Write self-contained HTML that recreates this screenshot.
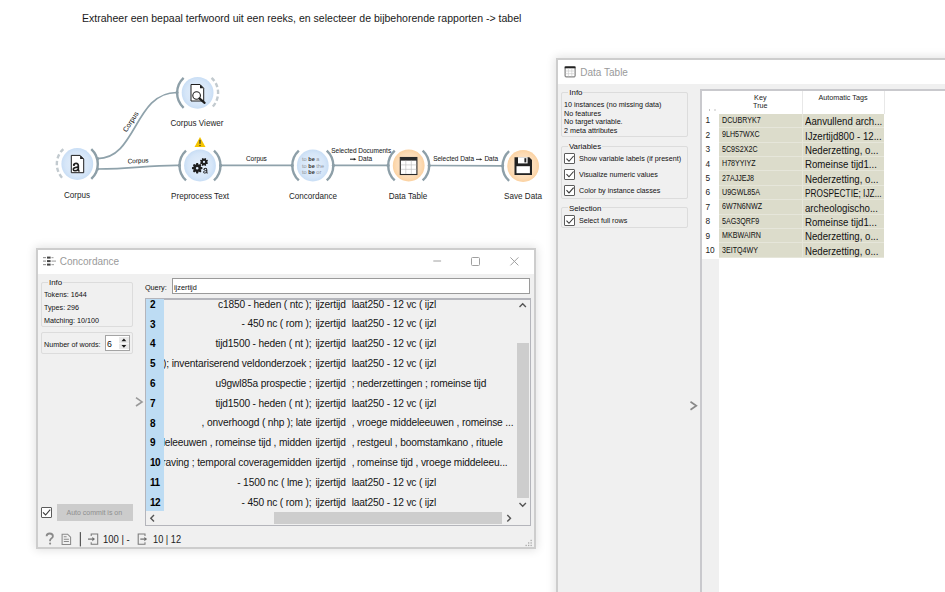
<!DOCTYPE html>
<html><head><meta charset="utf-8">
<style>
*{margin:0;padding:0;box-sizing:border-box}
html,body{width:945px;height:592px;overflow:hidden;background:#fff;font-family:"Liberation Sans",sans-serif;color:#000}
.a{position:absolute;white-space:nowrap}
#title{left:82px;top:12px;font-size:11.5px;line-height:12px;color:#1a1a1a;transform-origin:0 0;transform:scaleX(0.917)}
.win{position:absolute;background:#f0f0f0;border:2px solid #cdcdcd;box-shadow:0 0 9px 1px rgba(0,0,0,0.12)}
.tbar{position:absolute;left:0;top:0;right:0;height:24px;background:#fff}
.ttl{font-size:10px;color:#9a9a9a;line-height:12px}
.grp{position:absolute;border:1px solid #dcdcdc;border-radius:2px}
.glab{position:absolute;background:#f0f0f0;padding:0 1px;font-size:7.9px;line-height:9px;color:#111}
.sm{font-size:7.8px;line-height:9px;color:#111;transform:scaleX(0.92);transform-origin:0 0}
.cb{position:absolute;width:11px;height:11px;border:1px solid #5c5c5c;border-radius:1px;background:#fff}
.lbl{font-size:9px;line-height:10px;color:#1e1e1e;transform:translateX(-50%) scaleX(0.9)}
.ll{font-size:6.5px;line-height:8px;color:#1a1a1a;-webkit-text-stroke:0.05px #1a1a1a;transform:translateX(-50%)}
.row{position:absolute;left:0;height:20px;width:100%}
.ctx{font-size:10.2px;line-height:12px;color:#151515;letter-spacing:-0.15px}
.num{position:absolute;left:3.9px;font-size:10px;font-weight:bold;line-height:12px;color:#000;letter-spacing:-0.35px}
.tr{position:absolute;left:0;width:165px;height:14.4px;background:#dcdccb;border-bottom:1px solid #e6e6da}
.key{position:absolute;left:2.9px;top:2.3px;font-size:8.8px;line-height:9px;color:#111;transform:scaleX(0.81);transform-origin:0 0}
.tag{position:absolute;left:85.8px;top:2.4px;font-size:10px;line-height:11px;color:#111;transform:scaleX(0.965);transform-origin:0 0}
.rn{position:absolute;left:3.4px;font-size:8.3px;line-height:9px;color:#222}
</style></head><body>
<div id="title" class="a">Extraheer een bepaal terfwoord uit een reeks, en selecteer de bijbehorende rapporten -&gt; tabel</div>

<!-- ================= WORKFLOW CANVAS ================= -->
<svg class="a" style="left:0;top:0" width="560" height="240" viewBox="0 0 560 240">
 <defs>
  <radialGradient id="gb" cx="50%" cy="50%" r="50%">
   <stop offset="0" stop-color="#e6f0fb"/><stop offset="0.75" stop-color="#d6e6f8"/><stop offset="1" stop-color="#c9def5"/>
  </radialGradient>
  <radialGradient id="go" cx="50%" cy="50%" r="50%">
   <stop offset="0" stop-color="#fde9d2"/><stop offset="0.75" stop-color="#fcdcb7"/><stop offset="1" stop-color="#fbd2a2"/>
  </radialGradient>
 </defs>
 <!-- link arrows -->
 <path d="M350 159.2 H354.5" stroke="#1a1a1a" stroke-width="1"/><path d="M353.8 157.9 L356.4 159.2 L353.8 160.5 Z" fill="#1a1a1a"/>
 <path d="M476 159.4 H480.5" stroke="#333" stroke-width="0.9"/><path d="M479.9 158.2 L482.4 159.4 L479.9 160.6 Z" fill="#333"/>
 <!-- links -->
 <g fill="none" stroke="#8fa2ab" stroke-width="1.7">
  <path d="M97.5 158.6 C137 158.6 134 92.5 176.8 92.5"/>
  <path d="M97 169 C135 169 145 165 179.2 165.3"/>
  <path d="M220.7 165.4 L292.1 165.4"/>
  <path d="M333.6 165.4 L387.9 165.4"/>
  <path d="M428.8 165.5 L503 165.8"/>
 </g>
 <!-- nodes -->
 <g stroke="none">
  <circle cx="77.3" cy="164" r="15.9" fill="url(#gb)"/>
  <circle cx="197.6" cy="92.8" r="15.9" fill="url(#gb)"/>
  <circle cx="200" cy="165.5" r="15.9" fill="url(#gb)"/>
  <circle cx="312.8" cy="165.5" r="15.9" fill="url(#gb)"/>
  <circle cx="408.7" cy="165.5" r="15.9" fill="url(#go)"/>
  <circle cx="523.1" cy="166" r="15.9" fill="url(#go)"/>
 </g>
 <!-- solid anchor arcs -->
 <g fill="none" stroke="#8d9fa8" stroke-width="2.4" stroke-linecap="butt">
  <path d="M91.28 149.01 A20.5 20.5 0 0 1 91.28 178.99"/>
  <path d="M183.62 77.81 A20.5 20.5 0 0 0 183.62 107.79"/>
  <path d="M186.02 150.51 A20.5 20.5 0 0 0 186.02 180.49"/>
  <path d="M213.98 150.51 A20.5 20.5 0 0 1 213.98 180.49"/>
  <path d="M298.82 150.51 A20.5 20.5 0 0 0 298.82 180.49"/>
  <path d="M326.78 150.51 A20.5 20.5 0 0 1 326.78 180.49"/>
  <path d="M394.72 150.51 A20.5 20.5 0 0 0 394.72 180.49"/>
  <path d="M422.68 150.51 A20.5 20.5 0 0 1 422.68 180.49"/>
  <path d="M509.12 151.01 A20.5 20.5 0 0 0 509.12 180.99"/>
 </g>
 <!-- dashed arcs -->
 <g fill="none" stroke="#c2cacf" stroke-width="2.4" stroke-dasharray="4.3 2.5">
  <path d="M63.32 149.01 A20.5 20.5 0 0 0 63.32 178.99"/>
  <path d="M211.58 77.81 A20.5 20.5 0 0 1 211.58 107.79"/>
 </g>
 <!-- anchor dots -->
 <g fill="#8d9fa8">
  <circle cx="97.6" cy="158.6" r="1.6"/><circle cx="97.6" cy="169" r="1.6"/>
  <circle cx="177" cy="92.6" r="1.6"/>
  <circle cx="179.4" cy="165.4" r="1.6"/><circle cx="220.6" cy="165.4" r="1.6"/>
  <circle cx="292.2" cy="165.4" r="1.6"/><circle cx="333.4" cy="165.4" r="1.6"/>
  <circle cx="388.1" cy="165.4" r="1.6"/><circle cx="429.2" cy="165.5" r="1.6"/>
  <circle cx="502.6" cy="165.8" r="1.6"/>
 </g>
 <!-- icons: corpus doc -->
 <g fill="#fff" stroke="#1e1e1e" stroke-width="1">
  <path d="M71.3 155.4 H80.1 L83.7 159 V172.7 H71.3 Z"/>
  <path d="M191 84.5 H200 L203.7 88.2 V101 H191 Z"/>
 </g>
 <path d="M80.1 155.4 L83.7 159 L80.1 159 Z" fill="#1e1e1e"/>
 <path d="M200 84.5 L203.7 88.2 L200 88.2 Z" fill="#1e1e1e"/>
 <g transform="translate(72.4 163.4) scale(1.0)" fill="none" stroke="#1e1e1e" stroke-linecap="butt">
  <path d="M1.2 2.0 C1.5 0.5 2.8 0 3.7 0 C5.2 0 5.9 0.8 5.9 2.2 V6.8 C5.9 7.3 6.4 7.6 7.2 7.4" stroke-width="1.7"/>
  <path d="M5.9 3.6 C4.1 3.9 0.9 4.1 0.9 5.9 C0.9 7.0 1.6 7.4 2.4 7.4 C3.9 7.4 5.2 6.6 5.9 5.8" stroke-width="1.6"/>
  <circle cx="1.55" cy="1.75" r="0.85" fill="#1e1e1e" stroke="none"/>
 </g>
 <circle cx="196.6" cy="95.5" r="3.8" fill="#fff" stroke="#1e1e1e" stroke-width="1.1"/>
 <path d="M199.4 98.4 L204.6 102.8" stroke="#1e1e1e" stroke-width="2.2" stroke-linecap="round"/>
 <!-- preprocess gears -->
 <path d="M200.62 166.78 L202.43 167.37 L202.43 169.03 L200.62 169.62 L201.49 171.32 L200.32 172.49 L198.62 171.62 L198.03 173.43 L196.37 173.43 L195.78 171.62 L194.08 172.49 L192.91 171.32 L193.78 169.62 L191.97 169.03 L191.97 167.37 L193.78 166.78 L192.91 165.08 L194.08 163.91 L195.78 164.78 L196.37 162.97 L198.03 162.97 L198.62 164.78 L200.32 163.91 L201.49 165.08 Z M198.5 168.2 A1.3 1.3 0 1 0 195.9 168.2 A1.3 1.3 0 1 0 198.5 168.2 Z" fill="#1e1e1e" fill-rule="evenodd"/>
 <path d="M206.85 161.90 L207.99 162.86 L207.50 164.04 L206.02 163.92 L206.14 165.40 L204.96 165.89 L204.00 164.75 L203.04 165.89 L201.86 165.40 L201.98 163.92 L200.50 164.04 L200.01 162.86 L201.15 161.90 L200.01 160.94 L200.50 159.76 L201.98 159.88 L201.86 158.40 L203.04 157.91 L204.00 159.05 L204.96 157.91 L206.14 158.40 L206.02 159.88 L207.50 159.76 L207.99 160.94 Z M205.1 161.9 A1.1 1.1 0 1 0 202.9 161.9 A1.1 1.1 0 1 0 205.1 161.9 Z" fill="#1e1e1e" fill-rule="evenodd"/>
 <g transform="translate(203.1 168.3) scale(0.63)" fill="none" stroke="#1e1e1e" stroke-linecap="butt">
  <path d="M1.2 2.0 C1.5 0.5 2.8 0 3.7 0 C5.2 0 5.9 0.8 5.9 2.2 V6.8 C5.9 7.3 6.4 7.6 7.2 7.4" stroke-width="1.6"/>
  <path d="M5.9 3.5 C4.1 3.8 0.6 4.0 0.6 5.9 C0.6 7.1 1.4 7.6 2.3 7.6 C3.9 7.6 5.2 6.6 5.9 5.8" stroke-width="1.5"/>
  <circle cx="1.55" cy="1.75" r="0.85" fill="#1e1e1e" stroke="none"/>
 </g>
 <!-- warning -->
 <path d="M200 137 L205.5 147 L194.5 147 Z" fill="#f5c400"/>
 <rect x="199.4" y="139.8" width="1.2" height="4" fill="#333"/><rect x="199.4" y="145" width="1.2" height="1.1" fill="#333"/>
 <!-- concordance icon -->
 <g font-family="Liberation Sans" font-size="5.6" fill="#8e9399">
  <text x="302" y="161.3">to <tspan font-weight="bold" fill="#333">be</tspan> a</text>
  <text x="302" y="167.7">to <tspan font-weight="bold" fill="#333">be</tspan> the</text>
  <text x="302" y="174">to <tspan font-weight="bold" fill="#333">be</tspan> or</text>
 </g>
 <!-- data table icon -->
 <rect x="400.3" y="157.5" width="16.6" height="17" fill="#fff" stroke="#2a2a2a" stroke-width="1.1"/>
 <rect x="400.3" y="157.2" width="16.6" height="3.4" fill="#2a2a2a"/>
 <g stroke="#bbb" stroke-width="0.6">
  <path d="M405.8 160.6 V174 M411.3 160.6 V174 M400.8 164.9 H416.4 M400.8 169.3 H416.4"/>
 </g>
 <!-- save icon -->
 <path d="M514.5 157.2 H529.3 L532 159.9 V175 H514.5 Z" fill="#222"/>
 <rect x="518" y="157.2" width="9.6" height="6.2" fill="#fff"/>
 <rect x="524.4" y="158.2" width="1.9" height="4.2" fill="#222"/>
 <rect x="516.5" y="166.2" width="13.4" height="7" fill="#fff"/>
</svg>
<!-- node labels -->
<div class="a lbl" style="left:77.2px;top:189.5px">Corpus</div>
<div class="a lbl" style="left:197.2px;top:118px">Corpus Viewer</div>
<div class="a lbl" style="left:199.6px;top:190.7px">Preprocess Text</div>
<div class="a lbl" style="left:312.7px;top:190.5px">Concordance</div>
<div class="a lbl" style="left:408.4px;top:190.5px">Data Table</div>
<div class="a lbl" style="left:522.7px;top:191px">Save Data</div>
<!-- link labels -->
<div class="a ll" style="left:130.6px;top:118px;font-size:7px;transform:translateX(-50%) rotate(-57deg)">Corpus</div>
<div class="a ll" style="left:137.5px;top:157px;transform:translateX(-50%) rotate(-3deg)">Corpus</div>
<div class="a ll" style="left:256.4px;top:154.6px">Corpus</div>
<div class="a ll" style="left:361.2px;top:146.5px">Selected Documents</div>
<div class="a ll" style="left:365.2px;top:155.2px">Data</div>
<div class="a ll" style="left:453.6px;top:155.3px">Selected Data</div><div class="a ll" style="left:491.3px;top:155.3px">Data</div>

<!-- ================= DATA TABLE WINDOW ================= -->
<div class="win" style="left:556px;top:58px;width:400px;height:545px">
 <div class="tbar" style="height:23.8px"></div>
</div>
<svg class="a" style="left:564px;top:66px" width="12" height="12" viewBox="0 0 12 12">
 <rect x="1.1" y="0.9" width="10" height="10" rx="0.8" fill="#fff" stroke="#555" stroke-width="0.9"/>
 <rect x="0.7" y="0.4" width="10.8" height="1.9" fill="#222"/>
 <path d="M4.4 2.3 V10.5 M7.8 2.3 V10.5 M1.5 5 H10.7 M1.5 7.7 H10.7" stroke="#c8c8c8" stroke-width="0.6"/>
</svg>
<div class="a ttl" style="left:580.3px;top:66.6px">Data Table</div>
<!-- groups -->
<div class="grp" style="left:561px;top:92px;width:127px;height:45px"></div>
<div class="a glab" style="left:568.3px;top:88.1px">Info</div>
<div class="a sm" style="left:564.2px;top:100px">10 instances (no missing data)</div>
<div class="a sm" style="left:564.2px;top:108.5px">No features</div>
<div class="a sm" style="left:564.2px;top:117.2px">No target variable.</div>
<div class="a sm" style="left:564.2px;top:125.6px">2 meta attributes</div>

<div class="grp" style="left:561px;top:145.5px;width:127px;height:53px"></div>
<div class="a glab" style="left:567.9px;top:141.9px">Variables</div>
<div class="cb" style="left:564px;top:153px"></div>
<div class="a sm" style="left:578.6px;top:154px">Show variable labels (if present)</div>
<div class="cb" style="left:564px;top:168.5px"></div>
<div class="a sm" style="left:578.6px;top:169.5px">Visualize numeric values</div>
<div class="cb" style="left:564px;top:184.6px"></div>
<div class="a sm" style="left:578.6px;top:186px">Color by instance classes</div>

<div class="grp" style="left:561px;top:207.3px;width:127px;height:21px"></div>
<div class="a glab" style="left:567.9px;top:203.6px">Selection</div>
<div class="cb" style="left:564px;top:215px"></div>
<div class="a sm" style="left:578.6px;top:216px">Select full rows</div>

<svg class="a" style="left:0;top:0" width="945" height="592">
 <g fill="none" stroke="#3a3a3a" stroke-width="1.1">
  <path d="M566.5 158.6 L569 161.3 L573.6 156"/>
  <path d="M566.5 174.1 L569 176.8 L573.6 171.5"/>
  <path d="M566.5 190.2 L569 192.9 L573.6 187.6"/>
  <path d="M566.5 220.6 L569 223.3 L573.6 218"/>
 </g>
 <path d="M690.5 401.8 L696.3 405.8 L690.5 409.8" fill="none" stroke="#888" stroke-width="1.7"/>
</svg>

<!-- table view -->
<div class="a" style="left:700px;top:88.6px;width:260px;height:510px;background:#fff;border-left:2px solid #c9c9cd;border-top:2px solid #c9c9cd"></div>
<div class="a" style="left:702px;top:258.5px;width:17px;height:340px;background:#f0f0f0"></div>
<svg class="a" style="left:0;top:0" width="945" height="592"><rect x="709" y="109.5" width="1" height="1" fill="#888"/><rect x="714.5" y="109.5" width="1" height="1" fill="#888"/></svg>
<div class="a" style="left:760.3px;top:93.5px;font-size:7.2px;line-height:8.5px;text-align:center;color:#222;transform:translateX(-50%)">Key<br>True</div>
<div class="a" style="left:843px;top:94.2px;font-size:7.2px;line-height:8.5px;color:#222;transform:translateX(-50%)">Automatic Tags</div>
<div class="a" style="left:801.5px;top:91px;width:1px;height:22.6px;background:#e8e8e8"></div>
<div class="a" style="left:884px;top:91px;width:1px;height:22.6px;background:#e8e8e8"></div>
<div id="rows" class="a" style="left:719px;top:113.8px;width:166px;height:145px">
<!--BEGIN-rows-->
<div class="tr" style="top:0.0px"><div class="key">DCUBRYK7</div><div class="tag">Aanvullend arch...</div></div>
<div class="tr" style="top:14.4px"><div class="key">9LH57WXC</div><div class="tag">IJzertijd800 - 12...</div></div>
<div class="tr" style="top:28.8px"><div class="key">5C9S2X2C</div><div class="tag">Nederzetting, o...</div></div>
<div class="tr" style="top:43.2px"><div class="key">H78YYIYZ</div><div class="tag">Romeinse tijd1...</div></div>
<div class="tr" style="top:57.6px"><div class="key">27AJJEJ8</div><div class="tag">Nederzetting, o...</div></div>
<div class="tr" style="top:72.0px"><div class="key">U9GWL85A</div><div class="tag" style="transform:scaleX(0.83)">PROSPECTIE; IJZ...</div></div>
<div class="tr" style="top:86.4px"><div class="key">6W7N6NWZ</div><div class="tag">archeologischo...</div></div>
<div class="tr" style="top:100.8px"><div class="key">5AG3QRF9</div><div class="tag">Romeinse tijd1...</div></div>
<div class="tr" style="top:115.2px"><div class="key">MKBWAIRN</div><div class="tag">Nederzetting, o...</div></div>
<div class="tr" style="top:129.6px"><div class="key">3EITQ4WY</div><div class="tag">Nederzetting, o...</div></div>
<!--END-rows-->
</div>
<div id="rnums" class="a" style="left:702px;top:113.8px;width:17px;height:145px">
<!--BEGIN-rnums-->
<div class="rn" style="top:2.6px">1</div>
<div class="rn" style="top:17.0px">2</div>
<div class="rn" style="top:31.4px">3</div>
<div class="rn" style="top:45.8px">4</div>
<div class="rn" style="top:60.2px">5</div>
<div class="rn" style="top:74.6px">6</div>
<div class="rn" style="top:89.0px">7</div>
<div class="rn" style="top:103.4px">8</div>
<div class="rn" style="top:117.8px">9</div>
<div class="rn" style="top:132.2px">10</div>
<!--END-rnums-->
</div>
<div class="a" style="left:801.5px;top:113.8px;width:1px;height:144px;background:#e6e6da"></div>

<!-- ================= CONCORDANCE WINDOW ================= -->
<div class="win" style="left:35.5px;top:248px;width:500.2px;height:301px">
 <div class="tbar" style="height:24px"></div>
</div>
<svg class="a" style="left:43px;top:256px" width="14" height="11" viewBox="0 0 14 11">
 <g fill="#999"><rect x="0" y="1" width="3" height="1.2"/><rect x="0" y="4.5" width="3" height="1.2"/><rect x="0" y="8" width="3" height="1.2"/></g>
 <g fill="#444"><rect x="4" y="0.6" width="3.6" height="2"/><rect x="4" y="4.1" width="3.6" height="2"/><rect x="4" y="7.6" width="3.6" height="2"/></g>
 <g fill="#aaa"><rect x="8.5" y="1" width="2" height="1.2"/><rect x="8.5" y="4.5" width="4.5" height="1.2"/><rect x="8.5" y="8" width="2.5" height="1.2"/></g>
</svg>
<div class="a ttl" style="left:59.7px;top:255.5px;font-size:10px">Concordance</div>
<svg class="a" style="left:0;top:0" width="945" height="592">
 <g stroke="#a0a0a0" stroke-width="1" fill="none">
  <path d="M433.3 261 H441.1"/>
  <rect x="471.5" y="257.5" width="8" height="8" rx="1"/>
  <path d="M510.4 257.4 L518.4 265.4 M518.4 257.4 L510.4 265.4"/>
 </g>
</svg>
<!-- left panel -->
<div class="grp" style="left:41.3px;top:282px;width:92px;height:45px"></div>
<div class="a glab" style="left:48px;top:277.7px">Info</div>
<div class="a sm" style="left:43.9px;top:289.8px">Tokens: 1644</div>
<div class="a sm" style="left:43.9px;top:302.7px">Types: 296</div>
<div class="a sm" style="left:43.9px;top:316.1px">Matching: 10/100</div>
<div class="grp" style="left:41.3px;top:332px;width:92px;height:21.6px"></div>
<div class="a sm" style="left:43.9px;top:339.5px">Number of words:</div>
<div class="a" style="left:105.4px;top:335.3px;width:24.6px;height:15.3px;background:#fff;border:1.3px solid #a4a4a4"></div>
<div class="a sm" style="left:107px;top:340.2px;font-size:8.8px;transform:none">6</div>
<div class="a" style="left:119.2px;top:336.6px;width:9.5px;height:12.7px;background:#e9e9e9"></div><div class="a" style="left:119.2px;top:342.9px;width:9.5px;height:0.8px;background:#f8f8f8"></div>
<svg class="a" style="left:0;top:0" width="945" height="592">
 <path d="M121.5 341.3 L123.9 338.6 L126.3 341.3 Z M121.5 345 L123.9 347.8 L126.3 345 Z" fill="#1a1a1a"/>
 <path d="M136 397.7 L142 401.9 L136 406" fill="none" stroke="#999" stroke-width="1.6"/>
</svg>
<div class="cb" style="left:40.8px;top:506.9px;width:11px;height:11px"></div>
<svg class="a" style="left:0;top:0" width="945" height="592">
 <path d="M43 512.3 L45.6 515 L50.2 509.7" fill="none" stroke="#3a3a3a" stroke-width="1.1"/>
</svg>
<div class="a" style="left:57px;top:503.7px;width:75.8px;height:17.2px;background:#cccccc"></div>
<div class="a sm" style="left:66.5px;top:508px;color:#8e8e8e;font-size:7px;transform:none">Auto commit is on</div>
<!-- query -->
<div class="a sm" style="left:144.9px;top:282.5px;font-size:7.3px;transform:none">Query:</div>
<div class="a" style="left:172.2px;top:278px;width:358px;height:16px;background:#fff;border:1px solid #9a9a9a"></div>
<div class="a sm" style="left:174px;top:282.5px;font-size:7.3px;transform:none">ijzertijd</div>
<!-- list -->
<div class="a" style="left:145px;top:297.5px;width:385.5px;height:228px;background:#f0f0f0;border:1.3px solid #b4b5bb;border-top:2px solid #b4b5bb"></div>
<div id="clist" class="a" style="left:146px;top:299px;width:370.6px;height:212.2px;overflow:hidden">
<!--BEGIN-clist-->
<div class="a" style="left:0;top:0;width:18px;height:212.2px;background:#bddcf3"></div>
<div class="num" style="top:-0.3px">2</div>
<div class="num" style="top:19.5px">3</div>
<div class="num" style="top:39.3px">4</div>
<div class="num" style="top:59.1px">5</div>
<div class="num" style="top:78.9px">6</div>
<div class="num" style="top:98.7px">7</div>
<div class="num" style="top:118.5px">8</div>
<div class="num" style="top:138.3px">9</div>
<div class="num" style="top:158.1px">10</div>
<div class="num" style="top:177.9px">11</div>
<div class="num" style="top:197.7px">12</div>
<div class="a" style="left:18px;top:0;width:352.6px;height:212.2px;overflow:hidden">
<div class="a ctx" style="right:205.1px;top:-0.4px">c1850 - heden ( ntc );</div>
<div class="a ctx" style="left:151.4px;top:-0.4px">ijzertijd</div>
<div class="a ctx" style="left:187.7px;top:-0.4px">laat250 - 12 vc ( ijzl</div>
<div class="a ctx" style="right:205.1px;top:19.4px">- 450 nc ( rom );</div>
<div class="a ctx" style="left:151.4px;top:19.4px">ijzertijd</div>
<div class="a ctx" style="left:187.7px;top:19.4px">laat250 - 12 vc ( ijzl</div>
<div class="a ctx" style="right:205.1px;top:39.2px">tijd1500 - heden ( nt );</div>
<div class="a ctx" style="left:151.4px;top:39.2px">ijzertijd</div>
<div class="a ctx" style="left:187.7px;top:39.2px">laat250 - 12 vc ( ijzl</div>
<div class="a ctx" style="right:205.1px;top:59.0px">heden ( nt ); inventariserend veldonderzoek ;</div>
<div class="a ctx" style="left:151.4px;top:59.0px">ijzertijd</div>
<div class="a ctx" style="left:187.7px;top:59.0px">laat250 - 12 vc ( ijzl</div>
<div class="a ctx" style="right:205.1px;top:78.8px">u9gwl85a prospectie ;</div>
<div class="a ctx" style="left:151.4px;top:78.8px">ijzertijd</div>
<div class="a ctx" style="left:187.7px;top:78.8px">; nederzettingen ; romeinse tijd</div>
<div class="a ctx" style="right:205.1px;top:98.6px">tijd1500 - heden ( nt );</div>
<div class="a ctx" style="left:151.4px;top:98.6px">ijzertijd</div>
<div class="a ctx" style="left:187.7px;top:98.6px">laat250 - 12 vc ( ijzl</div>
<div class="a ctx" style="right:205.1px;top:118.4px">, onverhoogd ( nhp ); late</div>
<div class="a ctx" style="left:151.4px;top:118.4px">ijzertijd</div>
<div class="a ctx" style="left:187.7px;top:118.4px">, vroege middeleeuwen , romeinse ...</div>
<div class="a ctx" style="right:205.1px;top:138.2px">middeleeuwen , romeinse tijd , midden</div>
<div class="a ctx" style="left:151.4px;top:138.2px">ijzertijd</div>
<div class="a ctx" style="left:187.7px;top:138.2px">, restgeul , boomstamkano , rituele</div>
<div class="a ctx" style="right:205.1px;top:158.0px">opgraving ; temporal coveragemidden</div>
<div class="a ctx" style="left:151.4px;top:158.0px">ijzertijd</div>
<div class="a ctx" style="left:187.7px;top:158.0px">, romeinse tijd , vroege middeleeu...</div>
<div class="a ctx" style="right:205.1px;top:177.8px">- 1500 nc ( lme );</div>
<div class="a ctx" style="left:151.4px;top:177.8px">ijzertijd</div>
<div class="a ctx" style="left:187.7px;top:177.8px">laat250 - 12 vc ( ijzl</div>
<div class="a ctx" style="right:205.1px;top:197.6px">- 450 nc ( rom );</div>
<div class="a ctx" style="left:151.4px;top:197.6px">ijzertijd</div>
<div class="a ctx" style="left:187.7px;top:197.6px">laat250 - 12 vc ( ijzl</div>
</div>
<!--END-clist-->
</div>
<!-- vscroll -->
<div class="a" style="left:516.6px;top:299.5px;width:12.4px;height:211.7px;background:#f0f0f0"></div>
<div class="a" style="left:517px;top:343px;width:12px;height:154.7px;background:#cdcdcd"></div>
<!-- hscroll -->
<div class="a" style="left:146px;top:511.2px;width:383px;height:13.3px;background:#f0f0f0"></div>
<div class="a" style="left:273.8px;top:511.6px;width:228.4px;height:12.6px;background:#cdcdcd"></div>
<svg class="a" style="left:0;top:0" width="945" height="592">
 <g fill="none" stroke="#555" stroke-width="1.4">
  <path d="M519.5 307 L522.7 303.8 L525.9 307"/>
  <path d="M519.5 503 L522.7 506.2 L525.9 503"/>
  <path d="M154 515 L150.8 518.3 L154 521.6"/>
  <path d="M507.3 515 L510.5 518.3 L507.3 521.6"/>
 </g>
</svg>
<!-- status bar -->
<svg class="a" style="left:0;top:0" width="945" height="592">
 <path d="M46.6 536.2 C46.6 534.3 48 533.5 49.7 533.5 C51.6 533.5 52.9 534.6 52.9 536.2 C52.9 538.2 50.3 538.5 50.1 540.2 L50.1 541.3" fill="none" stroke="#8a8a8a" stroke-width="1.8"/>
 <circle cx="50.1" cy="543.6" r="1.05" fill="#8a8a8a"/>
 <g fill="none" stroke="#8a8a8a" stroke-width="1.05">
  <path d="M62.1 534.2 H67.6 L70.6 537.2 V544.4 H62.1 Z"/>
  <path d="M63.8 536.8 H66.6 M63.8 539.2 H68.9 M63.8 541.5 H68.9" stroke-width="1.1"/>
 </g>
 <rect x="79.8" y="532.1" width="1.15" height="14.3" fill="#505050"/>
 <g fill="none" stroke="#7a7a7a" stroke-width="1.05">
  <path d="M91.2 536 V533.9 H97.7 V544.3 H91.2 V542.3"/>
  <path d="M145 536 V533.9 H138.2 V544.3 H145 V542.3"/>
 </g>
 <path d="M88 539.1 H92.6" stroke="#6a6a6a" stroke-width="1.2"/><path d="M92.3 537 L95 539.1 L92.3 541.2 Z" fill="#6a6a6a"/>
 <path d="M140.3 539.1 H144.6" stroke="#6a6a6a" stroke-width="1.2"/><path d="M144.3 537 L147.1 539.1 L144.3 541.2 Z" fill="#6a6a6a"/>
</svg>
<div class="a" style="left:103px;top:533px;font-size:10.5px;line-height:12px;color:#222;transform:scaleX(0.9);transform-origin:0 0">100 | -</div>
<div class="a" style="left:152.7px;top:533px;font-size:10.5px;line-height:12px;color:#222;transform:scaleX(0.88);transform-origin:0 0">10 | 12</div>
<svg class="a" style="left:0;top:0" width="945" height="592">
 <g fill="#a8a8a8"><rect x="530.5" y="539.8" width="1.3" height="1.3"/><rect x="528" y="542.3" width="1.3" height="1.3"/><rect x="530.5" y="542.3" width="1.3" height="1.3"/><rect x="525.5" y="544.8" width="1.3" height="1.3"/><rect x="528" y="544.8" width="1.3" height="1.3"/><rect x="530.5" y="544.8" width="1.3" height="1.3"/></g>
</svg>
</body></html>
